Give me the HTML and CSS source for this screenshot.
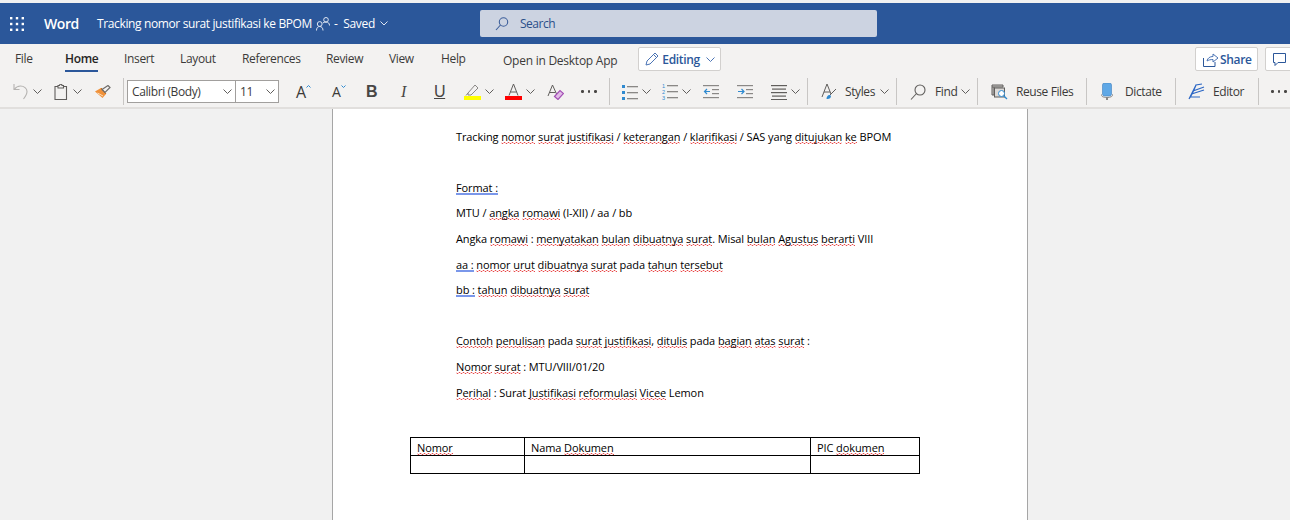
FILE: index.html
```html
<!DOCTYPE html>
<html lang="en">
  <head>
    <meta charset="UTF-8" />
    <title>Tracking nomor surat justifikasi ke BPOM</title>
    <link rel="stylesheet" href="styles.css">
  </head>
  <body>
    <!-- Title bar -->
    <header class="titlebar">
      <div class="title-left">
        <svg class="waffle" width="14" height="14" viewBox="0 0 14 14" fill="#fff">
          <rect x="0" y="0" width="2.4" height="2.4"/><rect x="5.8" y="0" width="2.4" height="2.4"/><rect x="11.6" y="0" width="2.4" height="2.4"/>
          <rect x="0" y="5.8" width="2.4" height="2.4"/><rect x="5.8" y="5.8" width="2.4" height="2.4"/><rect x="11.6" y="5.8" width="2.4" height="2.4"/>
          <rect x="0" y="11.6" width="2.4" height="2.4"/><rect x="5.8" y="11.6" width="2.4" height="2.4"/><rect x="11.6" y="11.6" width="2.4" height="2.4"/>
        </svg>
        <span class="app-name">Word</span>
        <span class="doc-name">Tracking nomor surat justifikasi ke BPOM</span>
        <svg class="people" width="14" height="14" viewBox="0 0 14 14" fill="none" stroke="#dfe6f2">
          <circle cx="3.7" cy="7" r="2.4"/><path d="M.5 13.5c0-2.5 1.2-4 3.2-4s3.300 1.500 3.300 4"/>
          <circle cx="10" cy="2.8" r="2.300"/><path d="M6.800 6c.8-.6 2-1 3.200-1 2 0 3.500 1.200 3.500 3.500"/>
        </svg>
        <span class="saved">-&nbsp; Saved</span>
        <svg class="chev" width="8" height="5" viewBox="0 0 8 5" fill="none" stroke="#dfe6f2"><path d="M.5.5 4 4 7.500.5"/></svg>
      </div>
      <div class="searchbox">
        <svg width="14" height="14" viewBox="0 0 14 14" fill="none" stroke="#3d5f9b" stroke-width="1.1"><circle cx="8.5" cy="5" r="4.2"/><path d="M5.500 8 1 13"/></svg>
        <span>Search</span>
      </div>
    </header>

    <!-- Tabs -->
    <nav class="tabs">
      <a class="tab tab-file">File</a>
      <a class="tab tab-home">Home</a>
      <a class="tab tab-insert">Insert</a>
      <a class="tab tab-layout">Layout</a>
      <a class="tab tab-refs">References</a>
      <a class="tab tab-review">Review</a>
      <a class="tab tab-view">View</a>
      <a class="tab tab-help">Help</a>
      <a class="open-desktop">Open in Desktop App</a>
      <button class="mode-btn">
        <svg width="14" height="14" viewBox="0 0 14 14" fill="none" stroke="#4b74b5"><path d="M1 13l1-4L10 1l3 3-8 8z"/><path d="M8.500 2.500l3 3"/></svg>
        <b>Editing</b>
        <svg width="9" height="5" viewBox="0 0 9 5" fill="none" stroke="#4b74b5"><path d="M.5.5l4 4 4-4"/></svg>
      </button>
      <button class="share-btn">
        <svg width="16" height="15" viewBox="0 0 16 15" fill="none" stroke="#2b579a"><path d="M.5 6v8.500h11.500V10"/><path d="M4 9c.5-3 3-4.500 6-4.500V2l5 4-5 4V7.500c-2.500 0-4.500.5-6 1.500z" stroke="#4b74b5"/></svg>
        <b>Share</b>
      </button>
      <button class="comment-btn">
        <svg width="13" height="13" viewBox="0 0 13 13" fill="none" stroke="#2b579a"><path d="M.5.5h12v9H5l-3 3v-3H.5z"/></svg>
      </button>
    </nav>

    <!-- Ribbon toolbar -->
    <div class="ribbon">
      <div class="rgroup g-undo">
        <svg width="16" height="17" viewBox="0 0 16 17" fill="none" stroke="#b5b3b1" stroke-width="1.1"><path d="M1 1v5.500h5.500"/><path d="M1.200 6.300C3 4 5 3 7.500 3 11 3 14 5.500 14 8.500c0 2.500-1.500 5-3.500 7.500"/></svg>
        <svg class="cv" width="9" height="5" viewBox="0 0 9 5"><path d="M.5.5l4 4 4-4"/></svg>
        <svg class="clip" width="14" height="16" viewBox="0 0 14 16" fill="none" stroke="#605e5c" stroke-width="1.1"><path d="M4 2.500H1v13h11.500v-13H9.500"/><path d="M4 4V1.500h1.500a1 1 0 0 1 2.500 0h1.500V4z" fill="#f3f2f1"/></svg>
        <svg class="cv cv-clip" width="9" height="5" viewBox="0 0 9 5"><path d="M.5.5l4 4 4-4"/></svg>
        <svg class="brush" width="16" height="14" viewBox="0 0 16 14"><path d="M0 6.500 6 3l5 6-3.500 4z" fill="#f0913a"/><path d="M2.500 8 8 11" stroke="#fbe0c0"/><path d="M6 3l5 6" stroke="#c96a10"/><path d="M7 4.500 13 .5l2 2-5 5z" fill="none" stroke="#6f6d6b" stroke-width="1.2"/></svg>
      </div>
      <div class="font-picker">
        <div class="fp fp-name"><span>Calibri (Body)</span><svg class="cv" width="9" height="5" viewBox="0 0 9 5"><path d="M.5.5l4 4 4-4"/></svg></div>
        <div class="fp fp-size"><span>11</span><svg class="cv" width="9" height="5" viewBox="0 0 9 5"><path d="M.5.5l4 4 4-4"/></svg></div>
      </div>
      <div class="rgroup g-format">
        <span class="ab ab-grow">A<svg width="5" height="3" viewBox="0 0 5 3" fill="none" stroke="#2f8ad0"><path d="M.5 2.500l2-2 2 2"/></svg></span>
        <span class="ab ab-shrink">A<svg width="5" height="3" viewBox="0 0 5 3" fill="none" stroke="#2f8ad0"><path d="M.5.5l2 2 2-2"/></svg></span>
        <span class="fb fb-b">B</span>
        <span class="fb fb-i">I</span>
        <span class="fb fb-u">U</span>
        <span class="colorbtn cb-mark">
          <svg width="17" height="16" viewBox="0 0 17 16" fill="none" stroke="#8a8886"><path d="M4 9l7-8 3 3-7 7H4z"/><path d="M2 11.500 4 9"/><rect x="0" y="12" width="17" height="4" fill="#ffff00" stroke="none"/></svg>
          <svg class="cv" width="9" height="5" viewBox="0 0 9 5"><path d="M.5.5l4 4 4-4"/></svg>
        </span>
        <span class="colorbtn cb-color">
          <svg width="17" height="16" viewBox="0 0 17 16" fill="none" stroke="#605e5c"><path d="M4 11.500 8.500 0 13 11.500"/><path d="M5.500 8h6"/><rect x="0" y="12" width="17" height="4" fill="#ff0000" stroke="none"/></svg>
          <svg class="cv" width="9" height="5" viewBox="0 0 9 5"><path d="M.5.5l4 4 4-4"/></svg>
        </span>
        <svg class="clear" width="17" height="16" viewBox="0 0 17 16" fill="none"><path d="M1 12 5.500 1 10 11M2.500 8.500h6" stroke="#605e5c"/><path d="M7.500 12.500l5.500-6 3.500 3-5.500 6z" fill="#e2bce8" stroke="#a34fb5" stroke-width="1.2"/></svg>
        <span class="dots"><i></i><i></i><i></i></span>
      </div>
      <div class="sep s1"></div>
      <div class="rgroup g-para">
        <svg width="16" height="16" viewBox="0 0 16 16"><g fill="#2f8ad0"><rect x="0" y="1" width="3" height="3"/><rect x="0" y="7" width="3" height="3"/><rect x="0" y="13" width="3" height="3"/></g><g fill="#8a8886"><rect x="5" y="2" width="11" height="1.3"/><rect x="5" y="8" width="11" height="1.3"/><rect x="5" y="14" width="11" height="1.3"/></g></svg>
        <svg class="cv" width="9" height="5" viewBox="0 0 9 5"><path d="M.5.5l4 4 4-4"/></svg>
        <svg class="num" width="16" height="17" viewBox="0 0 16 17"><g fill="#2f8ad0" font-size="5.5" font-family="Liberation Sans, sans-serif"><text x="0" y="5">1</text><text x="0" y="11">2</text><text x="0" y="16.500">3</text></g><g fill="#8a8886"><rect x="5" y="2" width="11" height="1.3"/><rect x="5" y="8" width="11" height="1.3"/><rect x="5" y="14" width="11" height="1.3"/></g></svg>
        <svg class="cv" width="9" height="5" viewBox="0 0 9 5"><path d="M.5.5l4 4 4-4"/></svg>
        <svg class="ind1" width="16" height="16" viewBox="0 0 16 16"><g fill="#8a8886"><rect x="0" y="1" width="16" height="1.2"/><rect x="9" y="5" width="7" height="1.2"/><rect x="9" y="9" width="7" height="1.2"/><rect x="0" y="13" width="16" height="1.2"/></g><path d="M7 7.500H1.500M4 5 1.500 7.500 4 10" fill="none" stroke="#2f8ad0" stroke-width="1.2"/></svg>
        <svg class="ind2" width="16" height="16" viewBox="0 0 16 16"><g fill="#8a8886"><rect x="0" y="1" width="16" height="1.2"/><rect x="9" y="5" width="7" height="1.2"/><rect x="9" y="9" width="7" height="1.2"/><rect x="0" y="13" width="16" height="1.2"/></g><path d="M1 7.500h6M4.500 5 7 7.500 4.500 10" fill="none" stroke="#2f8ad0" stroke-width="1.2"/></svg>
        <svg class="align" width="16" height="16" viewBox="0 0 16 16" fill="#605e5c"><rect x="0" y="1" width="16" height="1.2"/><rect x="1" y="4.500" width="14" height="1.2"/><rect x="0" y="8" width="16" height="1.2"/><rect x="1" y="11.500" width="14" height="1.2"/><rect x="0" y="15" width="16" height="1"/></svg>
        <svg class="cv" width="9" height="5" viewBox="0 0 9 5"><path d="M.5.5l4 4 4-4"/></svg>
      </div>
      <div class="sep s2"></div>
      <div class="rgroup g-styles">
        <svg width="16" height="17" viewBox="0 0 16 17" fill="none"><path d="M1 14 6 1l4 10M3 9h6" stroke="#605e5c"/><path d="M15 6 9 12" stroke="#605e5c"/><path d="M5.500 16c0-2.500 1.500-4.500 3.500-4l1 1c0 2-2 3.500-4.500 3z" fill="#2f8ad0"/></svg>
        <span class="rlabel">Styles</span>
        <svg class="cv" width="9" height="5" viewBox="0 0 9 5"><path d="M.5.5l4 4 4-4"/></svg>
      </div>
      <div class="sep"></div>
      <div class="rgroup g-find">
        <svg width="16" height="16" viewBox="0 0 16 16" fill="none" stroke="#605e5c" stroke-width="1.1"><circle cx="10" cy="6" r="5"/><path d="M6.500 9.500 1 15.500"/></svg>
        <span class="rlabel">Find</span>
        <svg class="cv" width="9" height="5" viewBox="0 0 9 5"><path d="M.5.5l4 4 4-4"/></svg>
      </div>
      <div class="sep"></div>
      <div class="rgroup g-reuse">
        <svg width="17" height="16" viewBox="0 0 17 16" fill="none"><path d="M1 1h11v2H1zM1 3v8h2V3" stroke="#605e5c" fill="#c8c6c4"/><rect x="3.500" y="4" width="10" height="9" fill="#dcdad8" stroke="#605e5c"/><circle cx="10.500" cy="9.500" r="3" fill="#fff" stroke="#2f8ad0"/><path d="M12.700 11.800 16 15" stroke="#2f8ad0" stroke-width="1.3"/></svg>
        <span class="rlabel">Reuse Files</span>
      </div>
      <div class="sep"></div>
      <div class="rgroup g-dictate">
        <svg width="12" height="17" viewBox="0 0 12 17"><rect x="1.500" y="0" width="9" height="13" rx="2" fill="#5fa8e6" stroke="#3f7fbf" stroke-width=".6"/><path d="M0 11c0 2.500 2.500 3.500 6 3.500s6-1 6-3.500" fill="none" stroke="#8a8886"/><rect x="5" y="14" width="2" height="3" fill="#8a8886"/></svg>
        <span class="rlabel">Dictate</span>
      </div>
      <div class="sep"></div>
      <div class="rgroup g-editor">
        <svg width="17" height="17" viewBox="0 0 17 17" fill="none" stroke="#2b66c4" stroke-width="1.2"><path d="M1 16 8 2l6-1M3.500 11 16 7M5 8 16 4M2 14h10M8 2c-2 5-4 10-7 14"/></svg>
        <span class="rlabel">Editor</span>
      </div>
      <div class="sep"></div>
      <span class="dots dots-end"><i></i><i></i><i></i></span>
    </div>

    <!-- Document area -->
    <main class="canvas">
      <article class="page">
        <p class="line">Tracking <u class="sp">nomor</u> <u class="sp">surat</u> <u class="sp">justifikasi</u> / <u class="sp">keterangan</u> / <u class="sp">klarifikasi</u> / SAS yang <u class="sp">ditujukan</u> <u class="sp">ke</u> BPOM</p>
        <p class="line">&nbsp;</p>
        <p class="line"><u class="gr">Format :</u></p>
        <p class="line">MTU / <u class="sp">angka</u> <u class="sp">romawi</u> (I-XII) / aa / bb</p>
        <p class="line">Angka <u class="sp">romawi</u> : <u class="sp">menyatakan</u> <u class="sp">bulan</u> <u class="sp">dibuatnya</u> <u class="sp">surat</u>. Misal <u class="sp">bulan</u> <u class="sp">Agustus</u> <u class="sp">berarti</u> VIII</p>
        <p class="line"><u class="gr">aa :</u> <u class="sp">nomor</u> <u class="sp">urut</u> <u class="sp">dibuatnya</u> <u class="sp">surat</u> pada <u class="sp">tahun</u> <u class="sp">tersebut</u></p>
        <p class="line"><u class="gr">bb :</u> <u class="sp">tahun</u> <u class="sp">dibuatnya</u> <u class="sp">surat</u></p>
        <p class="line">&nbsp;</p>
        <p class="line"><u class="sp">Contoh</u> <u class="sp">penulisan</u> pada <u class="sp">surat</u> <u class="sp">justifikasi</u>, <u class="sp">ditulis</u> pada <u class="sp">bagian</u> <u class="sp">atas</u> <u class="sp">surat</u> :</p>
        <p class="line"><u class="sp">Nomor</u> <u class="sp">surat</u> : MTU/VIII/01/20</p>
        <p class="line"><u class="sp">Perihal</u> : Surat <u class="sp">Justifikasi</u> <u class="sp">reformulasi</u> <u class="sp">Vicee</u> Lemon</p>
        <table class="doc-table">
          <tr>
            <td class="c1"><u class="sp">Nomor</u></td>
            <td class="c2">Nama <u class="sp">Dokumen</u></td>
            <td class="c3">PIC <u class="sp">dokumen</u></td>
          </tr>
          <tr>
            <td></td>
            <td></td>
            <td></td>
          </tr>
        </table>
      </article>
    </main>
  </body>
</html>
```

FILE: styles.css
```css
* {
  box-sizing: border-box;
}
html,
body {
  height: 520px;
  overflow: hidden;
}
body {
  margin: 0;
  font-family: "Open Sans", "Noto Sans", sans-serif;
  background-color: #f1f1f1;
  color: #252423;
  padding-top: 3px;
}
svg {
  display: block;
  flex: none;
}
.cv {
  fill: none;
  stroke: #605e5c;
}

/* title bar */
.titlebar {
  height: 41px;
  background-color: #2b579a;
  color: #fff;
  display: flex;
  align-items: center;
  padding-left: 10px;
}
.title-left {
  width: 470px;
  display: flex;
  align-items: center;
}
.app-name {
  font-weight: 600;
  font-size: 14px;
  letter-spacing: -0.4px;
  margin-left: 20px;
  width: 53px;
}
.doc-name {
  font-size: 12px;
  letter-spacing: -0.37px;
}
.people {
  margin-left: 4px;
}
.saved {
  font-size: 12px;
  margin-left: 4px;
  letter-spacing: -0.3px;
}
.chev {
  margin-left: 5px;
}
.searchbox {
  width: 397px;
  height: 27px;
  background-color: #ccd3e1;
  border-radius: 2px;
  display: flex;
  align-items: center;
  gap: 11px;
  padding-left: 15px;
  color: #2b4f8a;
  font-size: 12px;
  letter-spacing: -0.5px;
}

/* tabs */
.tabs {
  height: 31px;
  background-color: #f3f2f1;
  display: flex;
  align-items: center;
  font-size: 12px;
  letter-spacing: -0.35px;
  color: #3b3a39;
  padding-left: 15px;
  white-space: nowrap;
}
.tab {
  height: 25px;
  line-height: 24px;
  flex: none;
}
.tab-file { width: 50px; }
.tab-home {
  width: 33px;
  margin-right: 26px;
  font-weight: 600;
  border-bottom: 2px solid #2b579a;
  color: #252423;
}
.tab-insert { width: 56px; }
.tab-layout { width: 62px; }
.tab-refs { width: 84px; }
.tab-review { width: 63px; }
.tab-view { width: 52px; }
.tab-help { width: 62px; }
.open-desktop {
  width: 135px;
  flex: none;
  margin-top: 2px;
  letter-spacing: -0.25px;
}
button {
  font-family: inherit;
  background-color: #fff;
  border: 1px solid #d2d0ce;
  border-radius: 2px;
  display: flex;
  align-items: center;
  flex: none;
  padding: 0;
  height: 24px;
  margin-top: -1px;
  font-size: 12px;
  letter-spacing: -0.35px;
  color: #2b579a;
}
button b {
  font-weight: 600;
}
.mode-btn {
  width: 83px;
  padding-left: 6px;
  gap: 3px;
}
.mode-btn b {
  width: 38px;
  margin-right: 3px;
}
.share-btn {
  width: 63px;
  padding-left: 7px;
  gap: 1px;
  margin-left: auto;
  margin-right: 7px;
}
.comment-btn {
  width: 30px;
  padding-left: 7px;
  margin-right: -5px;
}

/* ribbon */
.ribbon {
  height: 34px;
  background-color: #f3f2f1;
  border-bottom: 2px solid #e1dfdd;
  display: flex;
  align-items: center;
  padding: 1px 0 0 13px;
  font-size: 12px;
  letter-spacing: -0.4px;
  color: #3b3a39;
}
.rgroup {
  display: flex;
  align-items: center;
  flex: none;
}
.sep {
  width: 1px;
  height: 27px;
  flex: none;
  background-color: #c8c6c4;
}
.g-undo {
  width: 111px;
  height: 27px;
  border-right: 1px solid #c8c6c4;
}
.g-undo .cv { margin-left: 4px; }
.clip { margin-left: 12px; }
.g-undo .cv-clip { margin-left: 5px; }
.brush { margin-left: 13px; }
.font-picker {
  display: flex;
  flex: none;
  margin-left: 3px;
  height: 23px;
  border: 1px solid #a19f9d;
  background-color: #fff;
  width: 152px;
}
.fp {
  display: flex;
  align-items: center;
  justify-content: space-between;
  padding: 0 3px 0 4px;
}
.fp-name {
  width: 108px;
  border-right: 1px solid #a19f9d;
}
.fp-size {
  flex: 1;
}
.g-format {
  margin-left: 17px;
  height: 24px;
}
.ab {
  display: flex;
  align-items: flex-start;
  color: #3b3a39;
  line-height: 22px;
  letter-spacing: 0;
}
.ab svg { margin-top: 4px; }
.ab-grow {
  font-size: 16px;
  width: 36px;
}
.ab-shrink {
  font-size: 14px;
  width: 34px;
}
.fb {
  width: 35px;
  font-size: 16px;
  line-height: 24px;
  color: #484644;
  font-family: "Liberation Sans", sans-serif;
}
.fb-b { font-weight: 700; }
.fb-i {
  width: 33px;
  font-style: italic;
  font-family: "Liberation Serif", serif;
}
.fb-u {
  text-decoration: underline;
  width: 30px;
}
.colorbtn {
  display: flex;
  align-items: center;
  gap: 4px;
  width: 41px;
}
.cb-color { width: 42px; }
.dots {
  display: flex;
  flex: none;
  gap: 4px;
  margin-left: 17px;
}
.dots i {
  display: block;
  width: 2.5px;
  height: 2.5px;
  background-color: #484644;
  border-radius: 50%;
}
.s1 { margin-left: 12.5px; }
.g-para {
  margin-left: 12px;
}
.g-para .cv { margin-left: 4px; }
.num { margin-left: 11px; }
.ind1 { margin-left: 12px; }
.ind2 { margin-left: 18px; }
.align { margin-left: 18px; }
.s2 { margin-left: 7px; }
.rlabel {
  margin-left: 8px;
}
.g-styles .cv,
.g-find .cv {
  margin-left: auto;
}
.g-styles {
  margin-left: 13px;
  width: 75px;
  padding-right: 7px;
}
.g-find {
  margin-left: 13px;
  width: 67px;
  padding-right: 7px;
}
.g-find .rlabel { margin-left: 9px; }
.g-reuse {
  margin-left: 13px;
  width: 95px;
}
.g-dictate {
  margin-left: 14px;
  width: 74px;
}
.g-dictate .rlabel { margin-left: 12px; }
.g-editor {
  margin-left: 12px;
  width: 70px;
}
.dots-end { margin-left: 12px; }

/* document */
.canvas {
  display: flex;
  padding-left: 332px;
}
.page {
  width: 696px;
  height: 411px;
  background-color: #fff;
  border-left: 1px solid #a6a6a6;
  border-right: 1px solid #a6a6a6;
  padding: 16.6px 0 0 123px;
  font-size: 11px;
  color: #000;
}
.line {
  margin: 0;
  height: 25.6px;
  line-height: 22px;
  white-space: nowrap;
  letter-spacing: -0.1px;
}
u {
  text-decoration: none;
}
.sp {
  background: url("data:image/svg+xml,%3Csvg xmlns='http://www.w3.org/2000/svg' width='4' height='2'%3E%3Cpath d='M0 .5 L1 1.500 L2 1.500 L3 .5 L4 .5' fill='none' stroke='%23e84a4a' stroke-width='1'/%3E%3C/svg%3E") left bottom repeat-x;
}
.gr {
  background: linear-gradient(#7a97ea, #7a97ea) left bottom / 100% 2px no-repeat;
}
.doc-table {
  margin: 29.4px 0 0 -46px;
  width: 510px;
  border-collapse: collapse;
  table-layout: fixed;
  font-size: 11px;
  letter-spacing: -0.1px;
}
.doc-table td {
  border: 1px solid #000;
  height: 18px;
  padding: 2px 6px 0;
  line-height: 15px;
  vertical-align: top;
}
.c1 { width: 114px; }
.c2 { width: 286px; }
```
